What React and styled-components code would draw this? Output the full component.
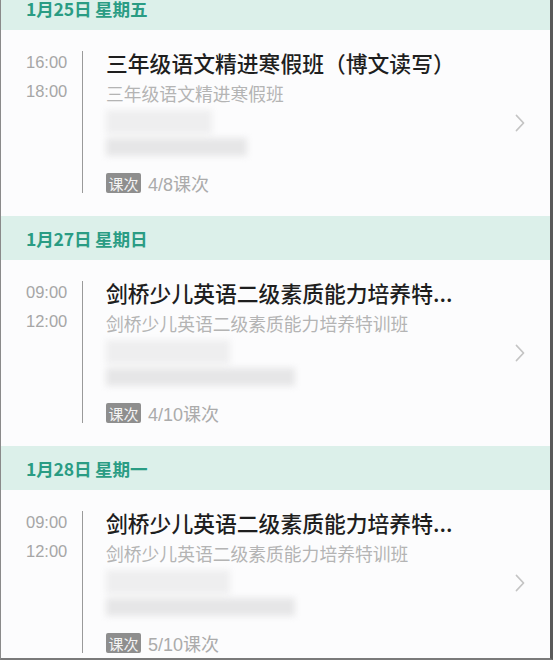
import React from "react";
import styled, { createGlobalStyle } from "styled-components";

const GlobalStyle = createGlobalStyle`
    html, body {
        margin: 0;
        padding: 0;
        background: #ffffff;
        overflow: hidden;
    }
    * {
        box-sizing: border-box;
    }
`;

const Frame = styled.div`
    width: 553px;
    height: 660px;
    overflow: hidden;
    background: #fcfcfd;
    border-left: 1px solid #8a8a8a;
    border-right: 3px solid #5a5a5a;
    border-bottom: 2px solid #7a7a7a;
    font-family: "Liberation Sans", "Noto Sans CJK SC", sans-serif;
`;

const DayHeader = styled.div`
    height: 44px;
    margin-top: ${(props) => (props.first ? "-14px" : "0")};
    display: flex;
    align-items: center;
    padding-left: 25px;
    background: #dcf0ea;
    color: #2a9c84;
    font-family: "Noto Sans CJK SC", sans-serif;
    font-size: 17.6px;
    font-weight: 700;
    letter-spacing: -0.2px;
`;

const Card = styled.div`
    height: 186px;
    display: flex;
    align-items: flex-start;
    padding: 21px 0 0 25px;
    background: #fcfcfd;
`;

const TimeColumn = styled.div`
    width: 56px;
    margin-top: -3px;
    display: flex;
    flex-direction: column;
    color: #a6a6a6;
    font-size: 16.5px;
    line-height: 29px;
`;

const Content = styled.div`
    flex: 1;
    height: 142px;
    padding-left: 23px;
    border-left: 1.5px solid #9a9a9a;
    display: flex;
    flex-direction: column;
`;

const Title = styled.div`
    font-family: "Noto Sans CJK SC", sans-serif;
    font-size: 21.8px;
    line-height: 24px;
    font-weight: 500;
    color: #1e1e1e;
    white-space: nowrap;
`;

const SubTitle = styled.div`
    margin-top: 3px;
    font-family: "Noto Sans CJK SC", sans-serif;
    font-size: 17.8px;
    line-height: 30px;
    color: #b4b4b4;
    white-space: nowrap;
`;

const Blurred = styled.div`
    height: 47px;
    margin-top: 2px;
    display: flex;
    flex-direction: column;
    gap: 4px;
    filter: blur(3px);
`;

const BlurBar = styled.div`
    height: ${(props) => props.h}px;
    width: ${(props) => props.w}px;
    background: ${(props) => props.c};
`;

const CountRow = styled.div`
    margin-top: auto;
    display: flex;
    align-items: center;
    gap: 7px;
    height: 20px;
`;

const Tag = styled.span`
    display: inline-flex;
    align-items: center;
    justify-content: center;
    width: 35px;
    height: 20px;
    border-radius: 2px;
    background: #8e8e8e;
    color: #f4f4f4;
    font-family: "Noto Sans CJK SC", sans-serif;
    font-size: 15px;
`;

const Count = styled.span`
    font-family: "Liberation Sans", "Noto Sans CJK SC", sans-serif;
    font-size: 18px;
    color: #ababab;
`;

const Chevron = styled.div`
    align-self: center;
    margin-top: -21px;
    margin-right: 25px;
    display: flex;
`;

const lessons = [
    {
        date: "1月25日 星期五",
        start: "16:00",
        end: "18:00",
        title: "三年级语文精进寒假班（博文读写）",
        sub: "三年级语文精进寒假班",
        count: "4/8课次",
        bars: [106, 141],
    },
    {
        date: "1月27日 星期日",
        start: "09:00",
        end: "12:00",
        title: "剑桥少儿英语二级素质能力培养特...",
        sub: "剑桥少儿英语二级素质能力培养特训班",
        count: "4/10课次",
        bars: [124, 189],
    },
    {
        date: "1月28日 星期一",
        start: "09:00",
        end: "12:00",
        title: "剑桥少儿英语二级素质能力培养特...",
        sub: "剑桥少儿英语二级素质能力培养特训班",
        count: "5/10课次",
        bars: [124, 189],
    },
];

const ChevronIcon = () => (
    <svg width="10" height="18" viewBox="0 0 10 18">
        <polyline points="1.5,1.5 8.5,9 1.5,16.5" fill="none" stroke="#c4c4c4" strokeWidth="1.8" strokeLinecap="round" strokeLinejoin="round" />
    </svg>
);

const App = () => {
    return (
        <>
            <GlobalStyle />
            <Frame>
                {lessons.map((lesson, index) => (
                    <div key={lesson.date}>
                        <DayHeader first={index === 0}>{lesson.date}</DayHeader>
                        <Card>
                            <TimeColumn>
                                <span>{lesson.start}</span>
                                <span>{lesson.end}</span>
                            </TimeColumn>
                            <Content>
                                <Title>{lesson.title}</Title>
                                <SubTitle>{lesson.sub}</SubTitle>
                                <Blurred>
                                    <BlurBar w={lesson.bars[0]} h={24} c="#eeeeef" />
                                    <BlurBar w={lesson.bars[1]} h={18} c="#e6e6e7" />
                                </Blurred>
                                <CountRow>
                                    <Tag>课次</Tag>
                                    <Count>{lesson.count}</Count>
                                </CountRow>
                            </Content>
                            <Chevron>
                                <ChevronIcon />
                            </Chevron>
                        </Card>
                    </div>
                ))}
            </Frame>
        </>
    );
};

export default App;
